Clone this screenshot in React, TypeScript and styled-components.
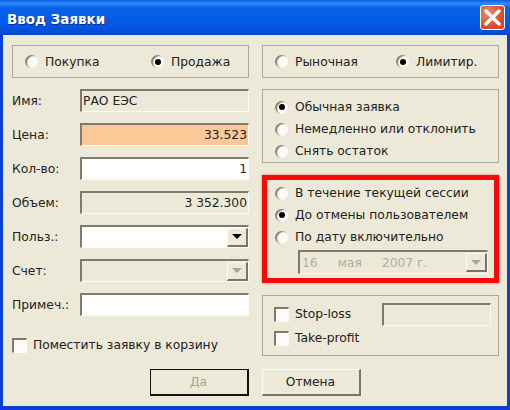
import styled, { createGlobalStyle } from "styled-components";

const GlobalStyle = createGlobalStyle`
  html, body {
    margin: 0;
    padding: 0;
    background: #ece9d8;
  }
  body {
    font-family: "DejaVu Sans", sans-serif;
    font-size: 12.3px;
    color: #222;
  }
`;

const Window = styled.div`
  width: 510px;
  height: 410px;
  display: flex;
  flex-direction: column;
  overflow: hidden;
  background: #0a3fd0;
`;
const TitleBar = styled.div`
  height: 35px;
  flex: none;
  display: flex;
  align-items: center;
  justify-content: space-between;
  padding: 0 5px 0 7px;
  background: linear-gradient(180deg, #0a5be4 0%, #2f8cf6 10%, #0a62ec 22%, #0357e6 75%, #0447c8 100%);
`;
const Title = styled.span`
  color: #fff;
  font-family: "DejaVu Sans", sans-serif;
  font-weight: bold;
  font-size: 13.5px;
  padding-top: 2px;
  text-shadow: 1px 1px 0 #0a2f90;
`;
const CloseButton = styled.div`
  width: 25px;
  height: 25px;
  box-sizing: border-box;
  border: 1px solid #fff;
  border-radius: 3px;
  background: radial-gradient(circle at 30% 30%, #e88a6c, #d5482a 70%);
  display: flex;
  align-items: center;
  justify-content: center;
`;
const Body = styled.div`
  flex: 1;
  display: flex;
  flex-direction: column;
  margin: 0 3px 4px;
  padding: 10px 8px 0 9px;
  background: #ece9d8;
`;
const Columns = styled.div`
  display: grid;
  grid-template-columns: 237px 237px;
  column-gap: 13px;
`;
const Column = styled.div`
  display: flex;
  flex-direction: column;
`;
const Group = styled.div<{ $mt?: number }>`
  box-sizing: border-box;
  border: 1px solid #aca899;
  margin-top: ${(p) => p.$mt ?? 0}px;
`;
const SideGroup = styled(Group)`
  height: 33px;
  display: flex;
  align-items: center;
  padding-left: 12px;
`;
const StackGroup = styled(Group)`
  height: 74px;
  padding: 6px 0 0 12px;
  display: flex;
  flex-direction: column;
`;
const RedGroup = styled.div`
  box-sizing: border-box;
  height: 108px;
  margin-top: 12px;
  border: 5px solid #f50a0a;
  box-shadow: 0 0 2px #f55;
  padding: 2px 0 0 8px;
  display: flex;
  flex-direction: column;
`;
const StopGroup = styled(Group)`
  height: 61px;
  margin-top: 12px;
  padding: 6px 7px 0 11px;
  display: grid;
  grid-template-columns: 1fr 109px;
  grid-auto-rows: 24px;
  align-items: end;
`;
const RadioRow = styled.div<{ $w?: number }>`
  height: 22px;
  display: flex;
  align-items: center;
  gap: 7px;
  width: ${(p) => (p.$w ? `${p.$w}px` : "auto")};
`;
const RadioMark = styled.span<{ $on?: boolean }>`
  width: 13px;
  height: 13px;
  flex: none;
  border-radius: 50%;
  background: #fbfbf8;
  box-shadow: inset 2px 1px 1px #85826f;
  display: flex;
  align-items: center;
  justify-content: center;
  &::after {
    content: "";
    width: 6px;
    height: 6px;
    border-radius: 50%;
    background: ${(p) => (p.$on ? "#000" : "transparent")};
  }
`;
const Form = styled.div`
  margin-top: 11px;
  display: grid;
  grid-template-columns: 68px 169px;
  grid-auto-rows: 23px;
  row-gap: 11px;
  align-items: center;
`;
const Label = styled.span`
  padding-top: 1px;
`;
const Field = styled.div<{ $bg?: string; $right?: boolean }>`
  box-sizing: border-box;
  height: 23px;
  border-style: solid;
  border-width: 2px 1px 1px 2px;
  border-color: #7e7b6b #fbfaf3 #fbfaf3 #7e7b6b;
  background: ${(p) => p.$bg ?? "#ece9d8"};
  display: flex;
  align-items: center;
  justify-content: ${(p) => (p.$right ? "flex-end" : "flex-start")};
  padding: 0 1px 1px 1px;
`;
const SelectField = styled(Field)`
  justify-content: flex-end;
  padding: 0;
`;
const DateField = styled(SelectField)`
  width: 190px;
  margin: 2px 0 0 23px;
  justify-content: space-between;
  flex: none;
  height: 24px;
`;
const DateText = styled.div`
  display: flex;
  gap: 20px;
  padding-left: 2px;
  color: #b0ad9c;
`;
const DropButton = styled.div<{ $off?: boolean }>`
  width: 21px;
  height: 19px;
  box-sizing: border-box;
  border-style: solid;
  border-width: 1px 2px 2px 1px;
  border-color: #fbfaf3 #77746a #77746a #fbfaf3;
  background: #ece9d8;
  display: flex;
  align-items: center;
  justify-content: center;
  &::after {
    content: "";
    border-style: solid;
    border-width: 5px 5px 0;
    border-color: ${(p) => (p.$off ? "#a8a595" : "#000")} transparent transparent;
  }
`;
const CheckRow = styled.div<{ $mt?: number }>`
  display: flex;
  align-items: center;
  gap: 6px;
  height: 24px;
  margin-top: ${(p) => p.$mt ?? 0}px;
`;
const CheckMark = styled.span`
  width: 15px;
  height: 15px;
  box-sizing: border-box;
  flex: none;
  background: #fbfbf8;
  border-style: solid;
  border-width: 2px 1px 1px 2px;
  border-color: #7e7b6b #fbfaf3 #fbfaf3 #7e7b6b;
`;
const Footer = styled.div`
  display: flex;
  justify-content: center;
  gap: 13px;
  margin-top: 12px;
  padding-right: 1px;
`;
const Button = styled.div<{ $off?: boolean }>`
  box-sizing: border-box;
  width: 99px;
  height: 27px;
  display: flex;
  align-items: center;
  justify-content: center;
  background: #ece9d8;
  color: ${(p) => (p.$off ? "#a8a595" : "#222")};
  border-style: solid;
  ${(p) =>
    p.$off
      ? "border-width: 1px 2px 2px 1px; border-color: #111;"
      : "border-width: 1px 2px 2px 1px; border-color: #fbfaf3 #77746a #77746a #fbfaf3;"}
`;

function Radio({ on, width, children }: { on?: boolean; width?: number; children: React.ReactNode }) {
  return (
    <RadioRow $w={width}>
      <RadioMark $on={on} />
      <span>{children}</span>
    </RadioRow>
  );
}

function Check({ mt, children }: { mt?: number; children: React.ReactNode }) {
  return (
    <CheckRow $mt={mt}>
      <CheckMark />
      <span>{children}</span>
    </CheckRow>
  );
}

export default function App() {
  return (
    <Window>
      <GlobalStyle />
      <TitleBar>
        <Title>Ввод Заявки</Title>
        <CloseButton>
          <svg width="17" height="17" viewBox="0 0 17 17">
            <path d="M2 2 L15 15 M15 2 L2 15" stroke="#fff" strokeWidth="3.4" strokeLinecap="round" />
          </svg>
        </CloseButton>
      </TitleBar>
      <Body>
        <Columns>
          <Column>
            <SideGroup>
              <Radio width={126}>Покупка</Radio>
              <Radio on>Продажа</Radio>
            </SideGroup>
            <Form>
              <Label>Имя:</Label>
              <Field>РАО ЕЭС</Field>
              <Label>Цена:</Label>
              <Field $bg="#fdc898" $right>33.523</Field>
              <Label>Кол-во:</Label>
              <Field $bg="#fff" $right>1</Field>
              <Label>Объем:</Label>
              <Field $right>3 352.300</Field>
              <Label>Польз.:</Label>
              <SelectField $bg="#fff"><DropButton /></SelectField>
              <Label>Счет:</Label>
              <SelectField><DropButton $off /></SelectField>
              <Label>Примеч.:</Label>
              <Field $bg="#fff" />
            </Form>
            <Check mt={17}>Поместить заявку в корзину</Check>
          </Column>
          <Column>
            <SideGroup>
              <Radio width={121}>Рыночная</Radio>
              <Radio on>Лимитир.</Radio>
            </SideGroup>
            <StackGroup $mt={11}>
              <Radio on>Обычная заявка</Radio>
              <Radio>Немедленно или отклонить</Radio>
              <Radio>Снять остаток</Radio>
            </StackGroup>
            <RedGroup>
              <Radio>В течение текущей сессии</Radio>
              <Radio on>До отмены пользователем</Radio>
              <Radio>По дату включительно</Radio>
              <DateField>
                <DateText>
                  <span>16</span>
                  <span>мая</span>
                  <span>2007 г.</span>
                </DateText>
                <DropButton $off />
              </DateField>
            </RedGroup>
            <StopGroup>
              <Check>Stop-loss</Check>
              <Field />
              <Check>Take-profit</Check>
            </StopGroup>
          </Column>
        </Columns>
        <Footer>
          <Button $off>Да</Button>
          <Button>Отмена</Button>
        </Footer>
      </Body>
    </Window>
  );
}
